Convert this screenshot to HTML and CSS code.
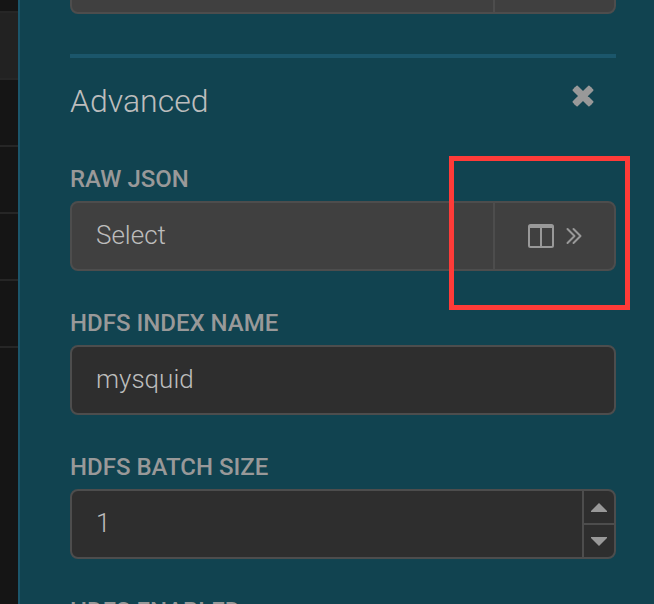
FILE: index.html
```html
<!DOCTYPE html>
<html lang="en">
<head>
<meta charset="utf-8">
<title>Advanced settings</title>
<link rel="stylesheet" href="styles.css">
</head>
<body>
<div class="rows" aria-hidden="true">
  <div class="row row-first"></div>
  <div class="row row-active"></div>
  <div class="row"></div>
  <div class="row"></div>
  <div class="row"></div>
  <div class="row"></div>
</div>
<main class="panel">
  <div class="control combo combo-previous">
    <select class="value" aria-label="Previous field"><option></option></select>
    <button class="action" type="button" aria-label="Open previous field"></button>
  </div>
  <section class="advanced">
    <header class="heading">
      <h2 class="title">Advanced</h2>
      <button class="close" type="button" aria-label="Close">
        <svg width="22" height="22" viewBox="0 0 22 22"><path d="M4.3 4.3 17.7 17.7M17.7 4.3 4.3 17.7" fill="none" stroke="#999" stroke-width="6.4"/><path d="M4.3 4.3 17.7 17.7M17.7 4.3 4.3 17.7" fill="none" stroke="#999" stroke-width="5" stroke-linecap="round" stroke-linejoin="round"/><path d="M1.3 5.1 5.1 1.3 20.7 16.9 16.9 20.7ZM16.9 1.3 20.7 5.1 5.1 20.7 1.3 16.9Z" fill="#999" stroke="#999" stroke-width="1.6" stroke-linejoin="round"/></svg>
      </button>
    </header>
    <div class="field">
      <label class="label" for="raw-json">RAW JSON</label>
      <div class="control combo">
        <select class="value" id="raw-json"><option>Select</option></select>
        <button class="action" type="button" aria-label="Open raw JSON pane">
          <svg width="26" height="24" viewBox="0 0 26 24"><rect x="1" y="1" width="24" height="22" rx="1.5" fill="none" stroke="#999" stroke-width="2"/><path d="M1 1H25V4H1ZM12 3H14V23H12Z" fill="#999"/></svg>
          <svg width="16" height="18" viewBox="0 0 16 18"><path d="M1.5 2 8.5 9 1.5 16M7.5 2 14.5 9 7.5 16" fill="none" stroke="#999" stroke-width="2" stroke-linecap="round" stroke-linejoin="round"/></svg>
        </button>
        <span class="highlight"></span>
      </div>
    </div>
    <div class="field">
      <label class="label" for="index-name">HDFS INDEX NAME</label>
      <div class="control">
        <input class="value" id="index-name" type="text" value="mysquid">
      </div>
    </div>
    <div class="field">
      <label class="label" for="batch-size">HDFS BATCH SIZE</label>
      <div class="control">
        <input class="value" id="batch-size" type="text" inputmode="numeric" value="1">
        <div class="spinner">
          <button class="step" type="button" aria-label="Increase"><svg width="16" height="9" viewBox="0 0 16 9"><path d="M8 0 16 8V9H0V8Z" fill="#999"/></svg></button>
          <button class="step" type="button" aria-label="Decrease"><svg width="16" height="9" viewBox="0 0 16 9"><path d="M8 9 16 1V0H0V1Z" fill="#999"/></svg></button>
        </div>
      </div>
    </div>
    <div class="field">
      <label class="label" for="enabled">HDFS ENABLED</label>
      <div class="control">
        <input class="value" id="enabled" type="text">
      </div>
    </div>
  </section>
</main>
</body>
</html>
```

FILE: styles.css
```css
* {
  box-sizing: border-box;
}

body {
  margin: 0;
  height: 100vh;
  display: flex;
  overflow: hidden;
  background: #151515;
  font-family: Roboto, "Liberation Sans", sans-serif;
}

.rows {
  flex: 0 0 18px;
}

.row {
  height: 67px;
  border-bottom: 2px solid #262626;
}

.row-first {
  height: 13px;
}

.row-active {
  background: #222;
}

.panel {
  flex: 1;
  min-width: 0;
  overflow: hidden;
  padding: 0 38px 0 50px;
  border-left: 2px solid #1b566b;
  background: #114350;
}

.control {
  position: relative;
  display: flex;
  height: 70px;
  border: 2px solid #4d4d4d;
  border-radius: 8px;
  background: #2e2e2e;
}

.combo {
  background: #404040;
}

.combo-previous {
  margin-top: -56px;
}

.value {
  flex: 1;
  min-width: 0;
  margin: 0;
  padding: 0 24px 2px;
  border: 0;
  outline: 0;
  appearance: none;
  background: transparent;
  color: #bdbdbd;
  font: 300 26px/32px Roboto, "Liberation Sans", sans-serif;
}

.action {
  flex: 0 0 121px;
  display: flex;
  align-items: center;
  justify-content: center;
  gap: 12px;
  padding: 0;
  border: 0;
  border-left: 2px solid #4d4d4d;
  background: transparent;
}

.highlight {
  position: absolute;
  top: -47px;
  right: -16px;
  width: 181px;
  height: 154px;
  border: 5px solid #ff3b38;
  pointer-events: none;
}

.advanced {
  margin-top: 40px;
  border-top: 4px solid #1b566b;
}

.heading {
  display: flex;
  align-items: flex-start;
  justify-content: space-between;
  height: 107px;
  padding: 24px 22px 0 0;
}

.title {
  margin: 0;
  color: #bdbdbd;
  font-size: 32px;
  font-weight: 300;
  line-height: 38px;
}

.close {
  display: flex;
  margin-top: 3px;
  padding: 0;
  border: 0;
  background: transparent;
}

.field {
  margin-bottom: 38px;
}

.label {
  display: block;
  margin-bottom: 8px;
  color: #999;
  font-size: 24px;
  font-weight: 500;
  line-height: 28px;
}

.spinner {
  flex: 0 0 32px;
  display: flex;
  flex-direction: column;
  border-left: 2px solid #4d4d4d;
}

.step {
  flex: 1;
  display: flex;
  align-items: center;
  justify-content: center;
  padding: 0;
  border: 0;
  background: transparent;
}

.step + .step {
  border-top: 2px solid #4d4d4d;
}
```
